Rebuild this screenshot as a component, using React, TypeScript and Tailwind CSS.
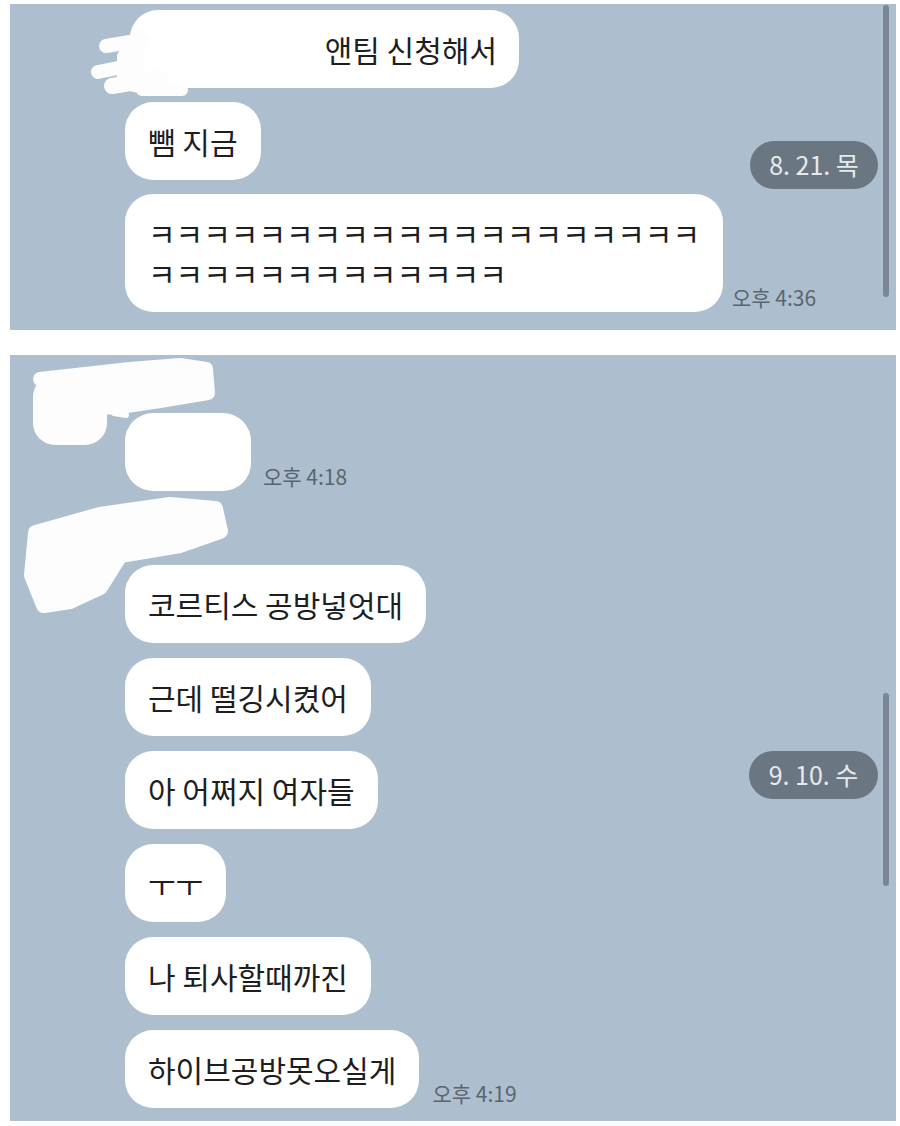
import React from 'react';

// 카톡 대화 캡처 두 장

const Bubble = ({ children, className = '' }: { children?: React.ReactNode; className?: string }) => (
  <div
    className={`bg-white rounded-[28px] px-[23px] py-[19px] text-[30px] leading-[40px] text-[#1e1e1e] whitespace-nowrap ${className}`}
  >
    {children}
  </div>
);

const Time = ({ children, className = '' }: { children: React.ReactNode; className?: string }) => (
  <span className={`text-[21px] leading-[26px] text-[#5b656f] whitespace-nowrap pb-[2px] ${className}`}>
    {children}
  </span>
);

const DatePill = ({ children, className = '' }: { children: React.ReactNode; className?: string }) => (
  <div
    className={`absolute h-[48px] rounded-full bg-[#6a7681] text-[#e6eaee] text-[25px] flex items-center justify-center ${className}`}
  >
    {children}
  </div>
);

export default function App() {
  return (
    <div className="min-h-[1126px] bg-white pt-[4px] font-['Noto_Sans_CJK_KR','Noto_Sans',sans-serif]">
      {/* 첫 번째 캡처 */}
      <div className="relative ml-[10px] w-[886px] h-[326px] bg-[#adbfce] overflow-hidden">
        <div className="flex flex-col items-start gap-[14px] pl-[115px] pt-[6px]">
          <Bubble className="ml-[5px] w-[389px] text-right !pr-[22px]">앤팀 신청해서</Bubble>
          <Bubble>뺌 지금</Bubble>
          <div className="flex items-end gap-[9px]">
            <Bubble className="!pr-[23px]">
              <span className="block">ㅋㅋㅋㅋㅋㅋㅋㅋㅋㅋㅋㅋㅋㅋㅋㅋㅋㅋㅋㅋ</span>
              <span className="block">ㅋㅋㅋㅋㅋㅋㅋㅋㅋㅋㅋㅋㅋ</span>
            </Bubble>
            <Time>오후 4:36</Time>
          </div>
        </div>

        {/* 가림 낙서 */}
        <svg className="absolute left-0 top-0" width="886" height="326" fill="none">
          <g stroke="#fdfdfd" strokeLinecap="round" strokeLinejoin="round">
            <path d="M96 42 L132 36" strokeWidth="14" />
            <path d="M88 68 L128 60" strokeWidth="14" />
            <path d="M102 82 L150 74" strokeWidth="16" />
            <path d="M132 86 L172 86" strokeWidth="12" />
            <path d="M112 52 L128 30 L128 84 L112 80 Z" fill="#fdfdfd" strokeWidth="10" />
          </g>
        </svg>

        <DatePill className="left-[740px] top-[137px] w-[128px]">8. 21. 목</DatePill>
        <div className="absolute left-[873px] top-[1px] w-[6px] h-[292px] rounded-full bg-[#7b8794]" />
      </div>

      {/* 두 번째 캡처 */}
      <div className="relative ml-[10px] mt-[25px] w-[886px] h-[766px] bg-[#adbfce] overflow-hidden">
        <div className="flex flex-col items-start pl-[115px] pt-[58px]">
          <div className="flex items-end gap-[12px]">
            <Bubble className="w-[126px] h-[78px]" />
            <Time>오후 4:18</Time>
          </div>

          <div className="flex flex-col items-start gap-[15px] mt-[74px]">
            <Bubble>코르티스 공방넣엇대</Bubble>
            <Bubble>근데 떨깅시켰어</Bubble>
            <Bubble>아 어쩌지 여자들</Bubble>
            <Bubble className="w-[101px]">ㅜㅜ</Bubble>
            <Bubble>나 퇴사할때까진</Bubble>
            <div className="flex items-end gap-[13px]">
              <Bubble>하이브공방못오실게</Bubble>
              <Time>오후 4:19</Time>
            </div>
          </div>
        </div>

        {/* 프로필 가림 낙서 */}
        <svg className="absolute left-0 top-0" width="886" height="766" fill="none">
          <g fill="#fdfdfd" stroke="#fdfdfd" strokeLinecap="round" strokeLinejoin="round">
            <rect x="23" y="20" width="74" height="70" rx="22" strokeWidth="0" />
            <path d="M30 24 L120 14 L170 10 L196 14 L198 38 L150 46 L110 52 L60 54 Z" strokeWidth="14" />
            <path d="M104 58 L116 60" strokeWidth="6" />
            <path d="M26 178 L90 160 L160 150 L205 154 L210 176 L170 190 L110 200 L90 232 L60 246 L34 250 L22 220 Z" strokeWidth="16" />
          </g>
        </svg>

        <DatePill className="left-[739px] top-[396px] w-[129px]">9. 10. 수</DatePill>
        <div className="absolute left-[873px] top-[338px] w-[6px] h-[193px] rounded-full bg-[#7b8794]" />
      </div>
    </div>
  );
}
